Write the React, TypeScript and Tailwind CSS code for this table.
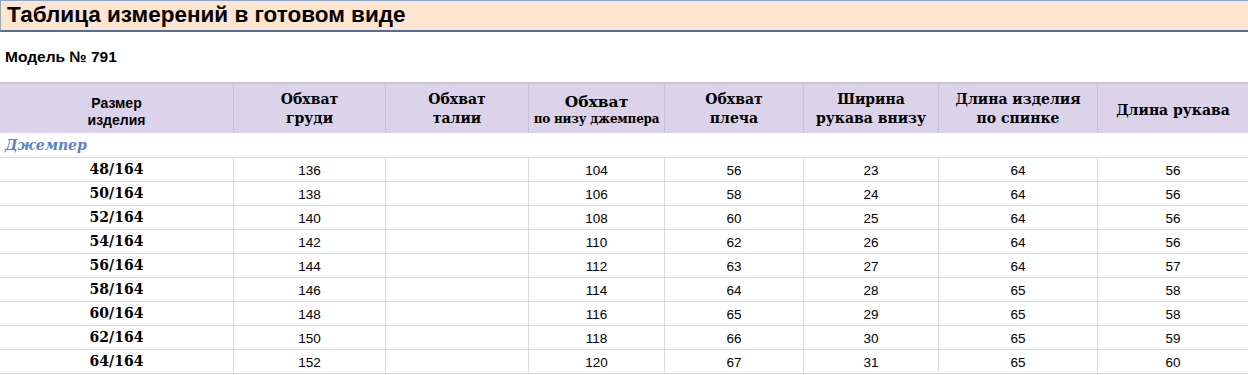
const rows = [
  ['48/164', '136', '', '104', '56', '23', '64', '56'],
  ['50/164', '138', '', '106', '58', '24', '64', '56'],
  ['52/164', '140', '', '108', '60', '25', '64', '56'],
  ['54/164', '142', '', '110', '62', '26', '64', '56'],
  ['56/164', '144', '', '112', '63', '27', '64', '57'],
  ['58/164', '146', '', '114', '64', '28', '65', '58'],
  ['60/164', '148', '', '116', '65', '29', '65', '58'],
  ['62/164', '150', '', '118', '66', '30', '65', '59'],
  ['64/164', '152', '', '120', '67', '31', '65', '60'],
]

const serif = "font-['DejaVu_Serif',serif]"
const cols = 'grid grid-cols-[233px_152px_143px_136px_139px_135px_159px_151px]'

export default function App() {
  return (
    <div className="w-[1248px] h-[375px] overflow-hidden bg-white font-['Liberation_Sans',Arial,sans-serif] text-black">
      <div className="h-[32px] bg-[#fde5d0] border-t border-[#8ea3c4] border-b-2 border-b-[#4a6ea8] border-l border-l-[#9aa] flex items-center pl-[6px]">
        <h1 className="text-[22.5px] font-bold leading-none">Таблица измерений в готовом виде</h1>
      </div>

      <div className="h-[50px] flex items-center pl-[5px]">
        <span className="text-[15.5px] font-bold">Модель № 791</span>
      </div>

      <div className={`${cols} h-[51px] overflow-hidden bg-[#dbd3e9] border-t-2 border-[#c6c6cc] text-center font-bold whitespace-nowrap`}>
        <div className="flex flex-col items-center justify-center text-[14px] leading-[17px] pt-[6px]">
          <span>Размер</span>
          <span>изделия</span>
        </div>
        <HeadCell a="Обхват" b="груди" />
        <HeadCell a="Обхват" b="талии" />
        <div className={`border-l border-[#c9c3d6] flex flex-col items-center justify-center ${serif} pt-[2px]`}>
          <span className="text-[15.5px] leading-[19px]">Обхват</span>
          <span className="text-[12px] leading-[16px] tracking-[-0.2px]">по низу джемпера</span>
        </div>
        <HeadCell a="Обхват" b="плеча" />
        <HeadCell a="Ширина" b="рукава внизу" />
        <HeadCell a="Длина изделия" b="по спинке" />
        <div className={`border-l border-[#c9c3d6] flex items-center justify-center ${serif} text-[14px] pt-[3px]`}>
          Длина рукава
        </div>
      </div>

      <div className="h-[25px] flex items-center pl-[5px] border-b border-[#dcdcdc]">
        <span className={`${serif} italic font-bold text-[14px] text-[#5a82c8]`}>Джемпер</span>
      </div>

      {rows.map(r => (
        <div key={r[0]} className={`${cols} h-[24px] border-b border-[#dcdcdc]`}>
          {r.map((v, i) => (
            <div
              key={i}
              className={`${i > 0 ? 'border-l border-[#dcdcdc]' : ''} flex items-center justify-center ${i === 0 ? `${serif} font-bold text-[14px]` : 'text-[13.5px] pt-[3px]'}`}
            >
              {v}
            </div>
          ))}
        </div>
      ))}
    </div>
  )
}

function HeadCell({ a, b }: { a: string, b: string }) {
  return (
    <div className={`border-l border-[#c9c3d6] flex flex-col items-center justify-center ${serif} text-[14px] leading-[19px]`}>
      <span>{a}</span>
      <span>{b}</span>
    </div>
  )
}
